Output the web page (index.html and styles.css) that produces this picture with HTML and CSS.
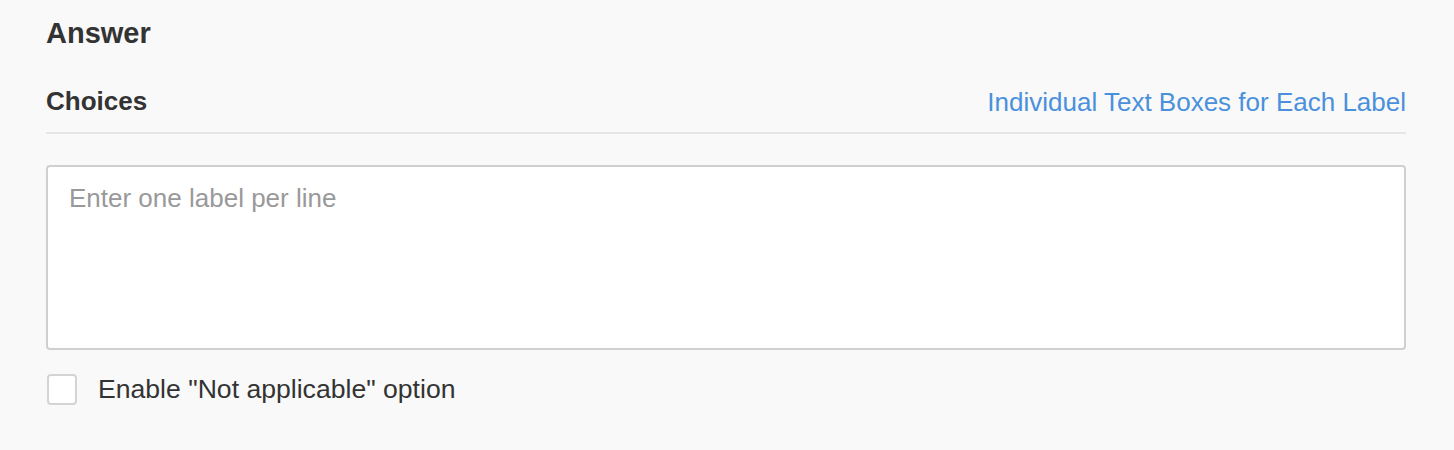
FILE: index.html
```html
<!DOCTYPE html>
<html lang="en">

<head>
    <meta charset="UTF-8">
    <title>Answer</title>
    <link rel="stylesheet" href="styles.css">
</head>

<body>
    <div class="answer">
        <h2 class="answer-title">Answer</h2>

        <!-- Choices header with link -->
        <div class="choices-head">
            <h3>Choices</h3>
            <a href="#" class="switch-link">Individual Text Boxes for Each Label</a>
        </div>

        <textarea class="labels" placeholder="Enter one label per line"></textarea>

        <label class="na-option">
            <input type="checkbox">
            <span class="box"></span>
            Enable "Not applicable" option
        </label>
    </div>
</body>

</html>
```

FILE: styles.css
```css
body {
    margin: 0;
    background: #f9f9f9;
    font-family: "Liberation Sans", Arial, sans-serif;
    color: #333;
}

.answer {
    padding: 17px 48px 0 46px;
}

.answer-title {
    font-size: 29px;
    margin: 0;
    line-height: 32px;
}

.choices-head {
    display: flex;
    justify-content: space-between;
    align-items: flex-end;
    margin-top: 37px;
    padding-bottom: 16px;
    border-bottom: 2px solid #e6e6e6;
}

.choices-head h3 {
    font-size: 26px;
    margin: 0;
    line-height: 30px;
}

.switch-link {
    font-size: 26px;
    line-height: 28px;
    color: #4a90dc;
    text-decoration: none;
}

.labels {
    display: block;
    box-sizing: border-box;
    width: 100%;
    height: 185px;
    margin-top: 31px;
    padding: 16px 21px;
    border: 2px solid #cfcfcf;
    border-radius: 4px;
    background: #fff;
    font-family: inherit;
    font-size: 26px;
    resize: none;
}

.labels::placeholder {
    color: #999;
}

.na-option {
    display: flex;
    align-items: center;
    margin-top: 24px;
    font-size: 26.6px;
}

.na-option input {
    display: none;
}

.na-option .box {
    width: 26px;
    height: 27px;
    border: 2px solid #d4d4d4;
    border-radius: 4px;
    background: #fff;
    margin-right: 21px;
    margin-left: 1px;
}
```
